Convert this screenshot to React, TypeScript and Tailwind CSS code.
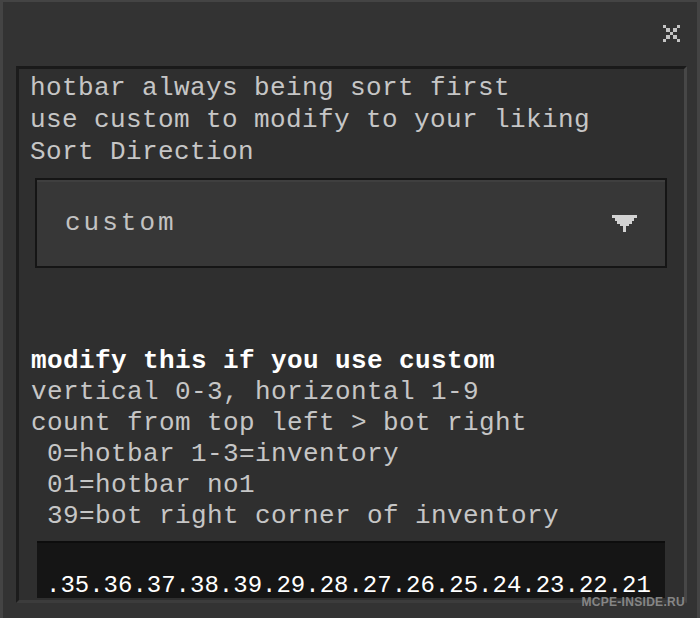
import React from "react";

const helpLines = [
  "vertical 0-3, horizontal 1-9",
  "count from top left > bot right",
  " 0=hotbar 1-3=inventory",
  " 01=hotbar no1",
  " 39=bot right corner of inventory",
];

function PixelClose() {
  // 5x5 pixel X like the game's close button
  const cells = [
    [0, 0], [4, 0], [1, 1], [3, 1], [2, 2], [1, 3], [3, 3], [0, 4], [4, 4],
  ];
  return (
    <svg width="17" height="17" viewBox="0 0 5 5" shapeRendering="crispEdges">
      {cells.map(([x, y]) => (
        <rect key={`${x}-${y}`} x={x} y={y} width="1" height="1" fill="#c4c4c4" />
      ))}
    </svg>
  );
}

function PixelArrow() {
  return (
    <svg width="27" height="17" viewBox="0 0 9 6" shapeRendering="crispEdges">
      <rect x="0" y="0" width="9" height="1" fill="#d2d2d2" />
      <rect x="1" y="1" width="7" height="1" fill="#d2d2d2" />
      <rect x="2" y="2" width="5" height="1" fill="#d2d2d2" />
      <rect x="3" y="3" width="3" height="1" fill="#d2d2d2" />
      <rect x="4" y="4" width="1" height="2" fill="#d2d2d2" />
    </svg>
  );
}

export default function App() {
  return (
    <div
      className="relative w-[700px] h-[618px] overflow-hidden bg-[#333333] border-t-2 border-l-[3px] border-r-[3px] border-[#444444] flex flex-col"
      style={{ fontFamily: '"Liberation Mono", "DejaVu Sans Mono", monospace' }}
    >
      {/* Title bar */}
      <div className="h-[64px] flex items-start justify-end pt-[23px] pr-[17px] shrink-0">
        <button type="button" className="leading-none">
          <PixelClose />
        </button>
      </div>

      {/* Scroll panel */}
      <div className="ml-[13px] mr-[10px] h-[537px] bg-[#2f2f2f] border-t-[3px] border-l-[3px] border-t-[#1a1a1a] border-l-[#1c1c1c] border-r-[3px] border-r-[#474747] border-b-[3px] border-b-[#3c3c3c] flex flex-col">
        <div className="pt-[3px] pl-[11px] text-[26px] leading-[32px] tracking-[0.4px] text-[#c6c6c6] whitespace-pre">
          <p>hotbar always being sort first</p>
          <p>use custom to modify to your liking</p>
          <p>Sort Direction</p>
        </div>

        {/* Dropdown */}
        <div className="mt-[10px] ml-[16px] w-[632px] h-[90px] shrink-0 bg-[#373737] border-2 border-[#151515] shadow-[inset_0_2px_0_#3f3f3f] flex items-center justify-between pl-[28px] pr-[27px]">
          <span className="text-[26px] leading-[32px] tracking-[3px] text-[#c2c2c2]">custom</span>
          <PixelArrow />
        </div>

        <div className="mt-[78px] pl-[12px] text-[26px] leading-[31px] tracking-[0.4px] whitespace-pre">
          <p className="text-white font-bold">modify this if you use custom</p>
          {helpLines.map((line) => (
            <p key={line} className="text-[#c6c6c6]">
              {line}
            </p>
          ))}
        </div>

        {/* Text input */}
        <div className="mt-[9px] ml-[18px] w-[628px] h-[57px] shrink-0 bg-[#151515] border-t-2 border-[#0d0d0d] flex items-end overflow-hidden pl-[9px]">
          <span className="text-[24px] leading-[24px] text-white whitespace-pre">
            .35.36.37.38.39.29.28.27.26.25.24.23.22.21
          </span>
        </div>
      </div>

      {/* Watermark */}
      <span
        className="absolute right-[12px] top-[591px] text-[12px] font-bold text-[#9a9a9a] opacity-80 tracking-[0.3px]"
        style={{ fontFamily: '"Liberation Sans", Arial, sans-serif' }}
      >
        MCPE-INSIDE.RU
      </span>
    </div>
  );
}
